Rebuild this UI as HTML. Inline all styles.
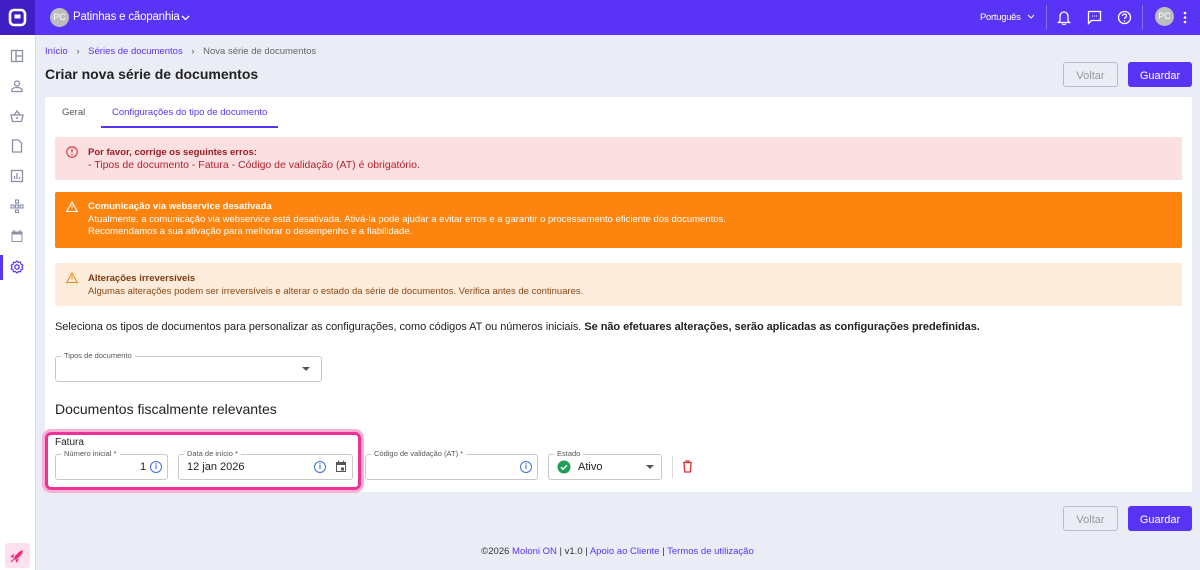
<!DOCTYPE html>
<html><head><meta charset="utf-8"><style>
*{box-sizing:border-box;margin:0;padding:0}
body{width:1200px;height:570px;overflow:hidden;background:#eaecf6;font-family:"Liberation Sans",sans-serif;color:#222;position:relative}
.top{position:absolute;left:0;top:0;width:1200px;height:35px;background:#5a34f6;color:#fff}
.logo{position:absolute;left:0;top:0;width:35px;height:35px;background:#3f1fc4}
.side{position:absolute;left:0;top:35px;width:35px;height:535px;background:#fff}
.side svg{position:absolute;left:10px}
.av{position:absolute;width:19px;height:19px;border-radius:50%;background:#bdbdbd;color:#fff;font-size:9px;line-height:19px;text-align:center}
.abs{position:absolute}
.btn{position:absolute;height:25px;border-radius:3px;font-size:11px;text-align:center;line-height:25px;padding-top:2px}
.ghost{border:1px solid #b9bbd2;color:#999;background:transparent;line-height:23px}
.pri{background:#5a34f6;color:#fff}
.card{position:absolute;left:45px;top:97px;width:1147px;height:395px;background:#fff;border-radius:2px}
.al{position:absolute;left:10px;width:1127px;border-radius:2px;font-size:9.5px;padding-left:33px}
.al b{font-size:9.5px}
.field{position:absolute;height:26px;border:1px solid #c8c8c8;border-radius:3px;background:#fff}
.lbl{position:absolute;top:-6px;left:5px;background:#fff;padding:0 3px;font-size:7.5px;color:#555;line-height:10px}
.info{position:absolute;width:12px;height:12px;border:1.3px solid #3f6fe0;border-radius:50%;color:#3f6fe0;font-size:8px;font-weight:bold;text-align:center;line-height:10px}
</style></head><body>
<div class="top">
 <div class="logo"><svg width="35" height="35"><rect x="10" y="10" width="15" height="15" rx="4" fill="none" stroke="#fff" stroke-width="2.6"/><rect x="14.5" y="14.5" width="6" height="4" fill="#fff"/></svg></div>
 <div class="av" style="left:50px;top:8px">PC</div>
 <div class="abs" style="left:73px;top:11px;font-size:11.5px;letter-spacing:-0.2px">Patinhas e cãopanhia</div>
 <svg class="abs" style="left:181px;top:14px" width="9" height="8"><path d="M1 2l3.5 3.5L8 2" stroke="#fff" fill="none" stroke-width="1.3"/></svg>
 <div class="abs" style="left:980px;top:12px;font-size:9.5px;letter-spacing:-0.3px">Português</div>
 <svg class="abs" style="left:1027px;top:14px" width="8" height="6"><path d="M1 1l3 3 3-3" stroke="#fff" fill="none"/></svg>
 <div class="abs" style="left:1046px;top:5px;width:1px;height:25px;background:#8a70f8"></div>
 <svg class="abs" style="left:1057px;top:10px" width="14" height="15"><path d="M3 11V6a4 4 0 018 0v5l1.5 1.5h-11zM5.5 13.5a1.5 1.5 0 003 0" stroke="#fff" fill="none" stroke-width="1.3"/></svg>
 <svg class="abs" style="left:1087px;top:10px" width="15" height="15"><path d="M1.5 1.5h12v9h-9l-3 3z" stroke="#fff" fill="none" stroke-width="1.3"/><path d="M5 6h1M7 6h1M9 6h1" stroke="#fff"/></svg>
 <svg class="abs" style="left:1117px;top:10px" width="15" height="15"><circle cx="7.5" cy="7.5" r="6" stroke="#fff" fill="none" stroke-width="1.3"/><path d="M5.5 6a2 2 0 114 0c0 1.3-2 1.5-2 3" stroke="#fff" fill="none" stroke-width="1.3"/><circle cx="7.5" cy="11" r=".8" fill="#fff"/></svg>
 <div class="abs" style="left:1142px;top:5px;width:1px;height:25px;background:#8a70f8"></div>
 <div class="av" style="left:1155px;top:7px">PC</div>
 <svg class="abs" style="left:1183px;top:11px" width="4" height="14"><circle cx="2" cy="2" r="1.3" fill="#fff"/><circle cx="2" cy="6.5" r="1.3" fill="#fff"/><circle cx="2" cy="11" r="1.3" fill="#fff"/></svg>
</div>
<div class="side">
 <svg style="top:14px" width="14" height="14"><rect x="1.5" y="1.5" width="11" height="11" fill="none" stroke="#8a8fa8" stroke-width="1.3"/><path d="M6 1.5v11M6 7h6.5" stroke="#8a8fa8" stroke-width="1.3"/></svg>
 <svg style="top:44px" width="14" height="14"><circle cx="7" cy="4.5" r="2.5" fill="none" stroke="#8a8fa8" stroke-width="1.3"/><path d="M2 12.5v-1.5c0-1.5 2-2.5 5-2.5s5 1 5 2.5v1.5z" fill="none" stroke="#8a8fa8" stroke-width="1.3"/></svg>
 <svg style="top:74px" width="14" height="14"><path d="M1 6h12l-1.5 6.5h-9zM4 6l3-4 3 4" fill="none" stroke="#8a8fa8" stroke-width="1.3"/><circle cx="7" cy="9" r="1" fill="#8a8fa8"/></svg>
 <svg style="top:104px" width="14" height="14"><path d="M2.5 1h6l3 3v9h-9z" fill="none" stroke="#8a8fa8" stroke-width="1.3"/></svg>
 <svg style="top:134px" width="14" height="14"><rect x="1.5" y="1.5" width="11" height="11" fill="none" stroke="#8a8fa8" stroke-width="1.3"/><path d="M4.5 10V7M7 10V4M9.5 10V8" stroke="#8a8fa8" stroke-width="1.3"/></svg>
 <svg style="top:164px" width="14" height="14"><g fill="none" stroke="#8a8fa8" stroke-width="1.1"><rect x="5.5" y="1" width="3" height="3"/><rect x="1" y="6" width="3" height="3"/><rect x="5.5" y="6" width="3" height="3"/><rect x="10" y="6" width="3" height="3"/><rect x="5.5" y="11" width="3" height="2.5"/></g></svg>
 <svg style="top:194px" width="14" height="14"><rect x="1.5" y="2.5" width="11" height="10.5" fill="#8a8fa8"/><rect x="2.5" y="5.5" width="9" height="6.5" fill="#fff"/><path d="M4 1v3M10 1v3" stroke="#8a8fa8" stroke-width="1.3"/></svg>
 <div class="abs" style="left:0;top:220px;width:3px;height:25px;background:#5a34f6"></div>
 <svg style="top:225px" width="14" height="14"><circle cx="7" cy="7" r="2.2" fill="none" stroke="#5a34f6" stroke-width="1.3"/><path d="M7 1l1.5 1.5 2-.3.5 2 1.8 1L12 7l.8 1.8-1.8 1-.5 2-2-.3L7 13l-1.5-1.5-2 .3-.5-2-1.8-1L2 7l-.8-1.8 1.8-1 .5-2 2 .3z" fill="none" stroke="#5a34f6" stroke-width="1.2"/></svg>
 <div class="abs" style="left:5px;top:508px;width:25px;height:25px;border-radius:3px;background:#fde0ee"></div>
 <svg style="top:514px" width="14" height="14"><path d="M3 11l2-4 4-4c2-1.5 4-1.5 4-1.5s0 2-1.5 4l-4 4z" fill="#f0287a"/><path d="M1 13l2.5-2.5M4 8L1.5 7.5 4 5.5M6 10l.5 2.5 2-2.5" stroke="#f0287a" stroke-width="1.2" fill="none"/></svg>
</div>
<div class="abs" style="left:35px;top:35px;width:1px;height:535px;background:#d9dbe8"></div>
<div class="abs" style="left:45px;top:46px;font-size:9.5px;color:#5a34f6">Início <span style="color:#555;margin:0 6px">›</span> Séries de documentos <span style="color:#555;margin:0 6px">›</span> <span style="color:#666">Nova série de documentos</span></div>
<div class="abs" style="left:45px;top:66px;font-size:14px;font-weight:bold;color:#222">Criar nova série de documentos</div>
<div class="btn ghost" style="left:1063px;top:62px;width:55px">Voltar</div>
<div class="btn pri" style="left:1128px;top:62px;width:64px">Guardar</div>
<div class="card">
 <div class="abs" style="left:17px;top:10px;font-size:9.5px;color:#555">Geral</div>
 <div class="abs" style="left:67px;top:10px;font-size:9.5px;color:#5a34f6">Configurações do tipo de documento</div>
 <div class="abs" style="left:56px;top:29px;width:177px;height:2px;background:#5a34f6"></div>
 <div class="al" style="top:40px;height:43px;background:#fbdfe1;color:#b3242e;padding-top:9px;line-height:13px">
  <svg class="abs" style="left:11px;top:9px" width="12" height="12"><circle cx="6" cy="6" r="5.2" fill="none" stroke="#e0303a" stroke-width="1.1"/><path d="M6 3v3.5" stroke="#e0303a" stroke-width="1.2"/><circle cx="6" cy="8.5" r=".7" fill="#e0303a"/></svg>
  <b style="color:#9a1c24">Por favor, corrige os seguintes erros:</b><br><span style="font-size:10.5px">- Tipos de documento - Fatura - Código de validação (AT) é obrigatório.</span></div>
 <div class="al" style="top:95px;height:56px;background:#fd840f;color:#fff;padding-top:9px;line-height:12.5px">
  <svg class="abs" style="left:11px;top:9px" width="12" height="11"><path d="M6 1l5.3 9.5H.7z" fill="none" stroke="#fff" stroke-width="1.1"/><path d="M6 4v3.5" stroke="#fff"/></svg>
  <b>Comunicação via webservice desativada</b><br>Atualmente, a comunicação via webservice está desativada. Ativá-la pode ajudar a evitar erros e a garantir o processamento eficiente dos documentos.<br>Recomendamos a sua ativação para melhorar o desempenho e a fiabilidade.</div>
 <div class="al" style="top:166px;height:43px;background:#fdebdc;color:#8a4a14;padding-top:9px;line-height:13px">
  <svg class="abs" style="left:11px;top:9px" width="12" height="11"><path d="M6 1l5.3 9.5H.7z" fill="none" stroke="#f08a1a" stroke-width="1.1"/><path d="M6 4v3.5" stroke="#f08a1a"/></svg>
  <b style="color:#7a3c0c">Alterações irreversíveis</b><br>Algumas alterações podem ser irreversíveis e alterar o estado da série de documentos. Verifica antes de continuares.</div>
 <div class="abs" style="left:10px;top:224px;font-size:11px;color:#222;letter-spacing:-0.05px">Seleciona os tipos de documentos para personalizar as configurações, como códigos AT ou números iniciais. <b>Se não efetuares alterações, serão aplicadas as configurações predefinidas.</b></div>
 <div class="field" style="left:10px;top:259px;width:267px;height:26px"><div class="lbl">Tipos de documento</div><svg class="abs" style="left:246px;top:10px" width="8" height="5"><path d="M0 0h8L4 4z" fill="#555"/></svg></div>
 <div class="abs" style="left:10px;top:304px;font-size:14px;color:#222">Documentos fiscalmente relevantes</div>
 <div class="abs" style="left:0px;top:335px;width:316px;height:58px;border:3px solid #ef3096;border-radius:6px;box-shadow:0 0 0 3px #f8b0d4"></div>
 <div class="abs" style="left:10px;top:340px;font-size:10px;color:#222">Fatura</div>
 <div class="field" style="left:10px;top:357px;width:113px"><div class="lbl">Número inicial *</div><div class="abs" style="left:84px;top:6px;font-size:11px">1</div><div class="info" style="left:94px;top:6px">i</div></div>
 <div class="field" style="left:133px;top:357px;width:175px"><div class="lbl">Data de início *</div><div class="abs" style="left:8px;top:6px;font-size:11px">12 jan 2026</div><div class="info" style="left:135px;top:6px">i</div><svg class="abs" style="left:156px;top:5px" width="12" height="13"><rect x="1" y="2" width="10" height="10" fill="#555"/><rect x="2" y="5" width="8" height="6" fill="#fff"/><rect x="6" y="7.5" width="3" height="3" fill="#555"/><path d="M3.5 0.5v2M8.5 0.5v2" stroke="#555"/></svg></div>
 <div class="field" style="left:320px;top:357px;width:173px"><div class="lbl">Código de validação (AT) *</div><div class="info" style="left:154px;top:6px">i</div></div>
 <div class="field" style="left:503px;top:357px;width:114px"><div class="lbl">Estado</div><svg class="abs" style="left:8px;top:5px" width="14" height="14"><circle cx="7" cy="7" r="6.5" fill="#21a055"/><path d="M4 7.2l2 2 4-4" stroke="#fff" stroke-width="1.5" fill="none"/></svg><div class="abs" style="left:29px;top:6px;font-size:11px">Ativo</div><svg class="abs" style="left:97px;top:10px" width="8" height="5"><path d="M0 0h8L4 4z" fill="#555"/></svg></div>
 <div class="abs" style="left:627px;top:359px;width:1px;height:22px;background:#ddd"></div>
 <svg class="abs" style="left:637px;top:363px" width="11" height="13"><path d="M1 2.5h9M4 2.5V1h3v1.5M2 2.5l.7 9.5h5.6l.7-9.5" stroke="#e0303a" stroke-width="1.3" fill="none"/></svg>
</div>
<div class="btn ghost" style="left:1063px;top:506px;width:55px">Voltar</div>
<div class="btn pri" style="left:1128px;top:506px;width:64px">Guardar</div>
<div class="abs" style="left:0;width:1235px;top:546px;text-align:center;font-size:9.5px;color:#333">©2026 <span style="color:#5a34f6">Moloni ON</span> | v1.0 | <span style="color:#5a34f6">Apoio ao Cliente</span> | <span style="color:#5a34f6">Termos de utilização</span></div>
</body></html>
